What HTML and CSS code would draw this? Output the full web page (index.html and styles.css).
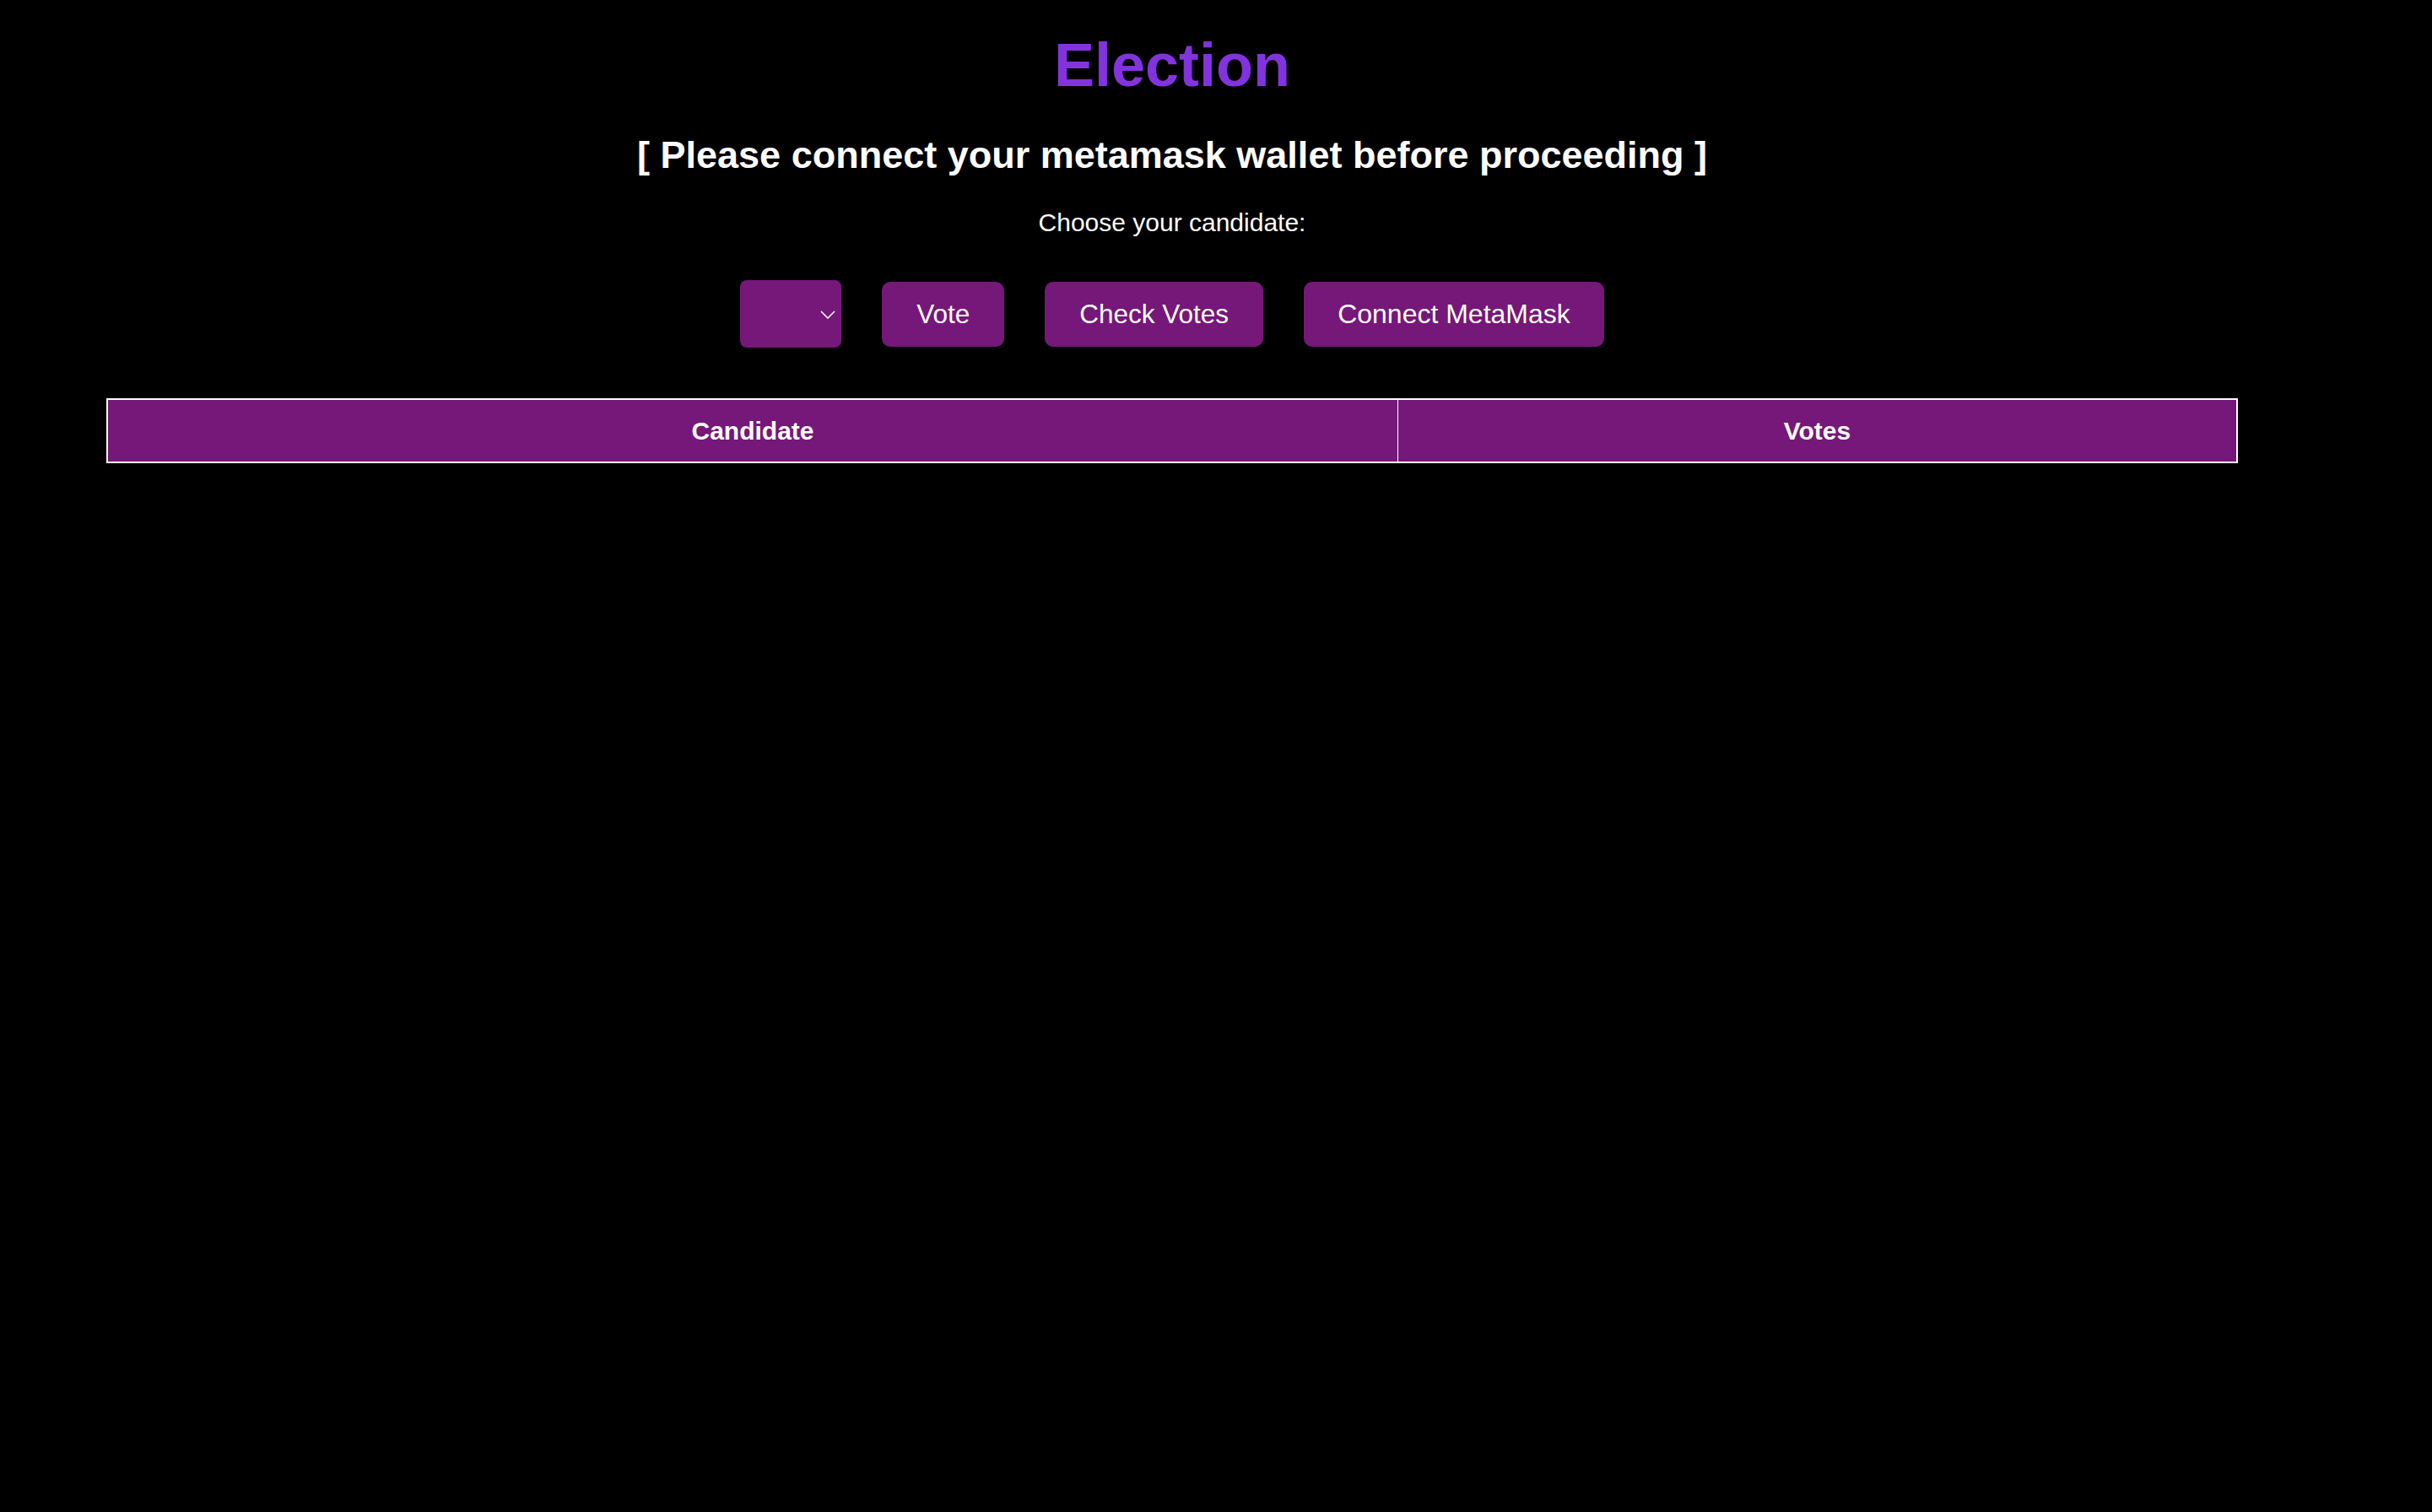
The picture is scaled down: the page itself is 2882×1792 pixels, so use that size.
FILE: index.html
```html
<!DOCTYPE html>
<html lang="en">
<head>
<meta charset="utf-8">
<title>Election</title>
<link rel="stylesheet" href="styles.css">
</head>
<body>
<div class="page">
  <h1 class="title">Election</h1>
  <h2 class="notice">[ Please connect your metamask wallet before proceeding ]</h2>
  <p class="prompt">Choose your candidate:</p>
  <div class="controls">
    <span class="select-wrap">
      <select class="candidate-select"><option></option></select>
      <svg class="chevron" width="18" height="10" viewBox="0 0 18 10"><path d="M1 1 L9 9 L17 1" fill="none" stroke="#fff" stroke-width="1.6"/></svg>
    </span>
    <button class="btn">Vote</button>
    <button class="btn">Check Votes</button>
    <button class="btn btn-wide">Connect MetaMask</button>
  </div>
  <table class="results">
    <colgroup><col class="col-candidate"><col></colgroup>
    <thead>
      <tr><th>Candidate</th><th>Votes</th></tr>
    </thead>
    <tbody></tbody>
  </table>
</div>
</body>
</html>
```

FILE: styles.css
```css
html, body {
  margin: 0;
  padding: 0;
  background: #000;
}
body {
  font-family: "Liberation Sans", Arial, Helvetica, sans-serif;
  color: #fff;
  min-height: 1792px;
}
.page {
  width: 2778px;
  text-align: center;
  display: flex;
  flex-direction: column;
  align-items: center;
}
.title {
  margin: 35px 0 0;
  font-size: 72px;
  line-height: 84px;
  font-weight: 700;
  color: #8233dd;
}
.notice {
  margin: 38px 0 0;
  font-size: 45px;
  line-height: 53px;
  font-weight: 700;
  color: #fff;
}
.prompt {
  margin: 36px 0 0;
  font-size: 30px;
  line-height: 36px;
}
.controls {
  margin-top: 50px;
  display: flex;
  align-items: center;
  gap: 48px;
  height: 80px;
}
.select-wrap {
  position: relative;
  display: block;
  width: 120px;
  height: 80px;
}
.candidate-select {
  appearance: none;
  -webkit-appearance: none;
  width: 120px;
  height: 80px;
  border: none;
  border-radius: 8px;
  background: #76177a;
  color: #fff;
  font-size: 30px;
  display: block;
}
.chevron {
  position: absolute;
  right: 7px;
  top: 36px;
}
.btn {
  height: 77px;
  padding: 0 41px;
  border: none;
  border-radius: 10px;
  background: #76177a;
  color: #fff;
  font-family: "Liberation Sans", Arial, Helvetica, sans-serif;
  font-size: 31.5px;
  line-height: 36px;
}
.btn-wide {
  padding: 0 40px;
  font-size: 32px;
}
.results {
  margin-top: 60px;
  width: 2526px;
  table-layout: fixed;
  border-spacing: 0;
  border: 2px solid #fff;
}
.col-candidate {
  width: 1528px;
}
.results th {
  height: 73px;
  padding: 0;
  background: #76177a;
  color: #fff;
  font-size: 30px;
  font-weight: 700;
}
.results th + th {
  border-left: 1px solid #fff;
}
```
